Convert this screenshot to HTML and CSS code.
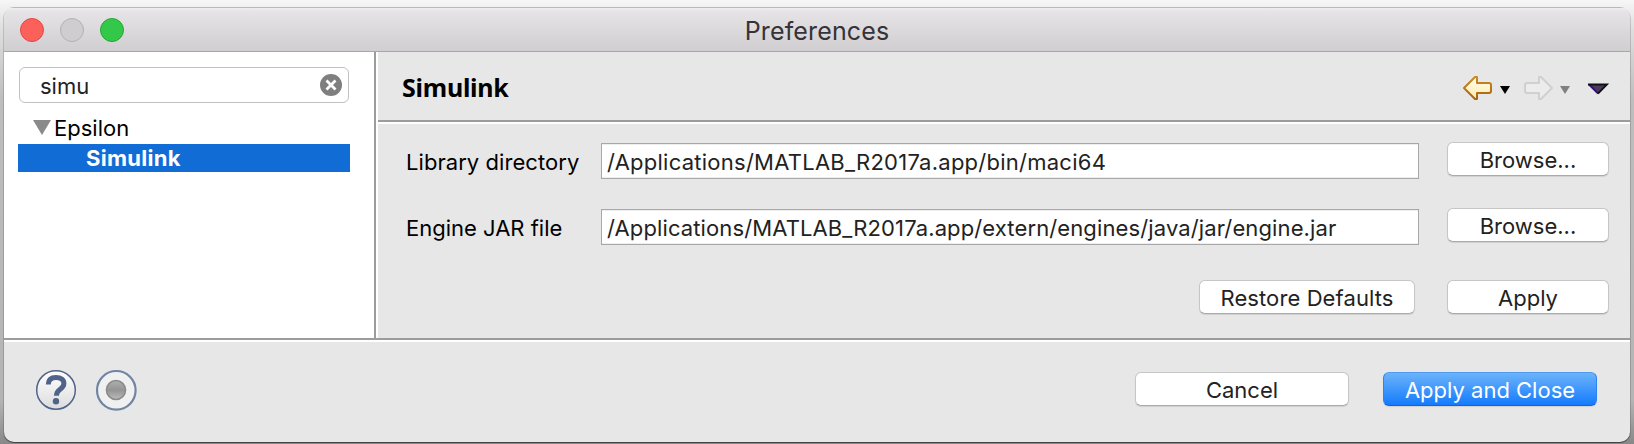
FILE: index.html
```html
<!DOCTYPE html>
<html lang="en">
<head>
<meta charset="utf-8">
<title>Preferences</title>
<link rel="stylesheet" href="styles.css">
</head>
<body>
<div class="window">
  <header class="titlebar">
    <div class="lights"><span class="light close"></span><span class="light min"></span><span class="light max"></span></div>
    <span class="title">Preferences</span>
  </header>
  <div class="main">
    <aside class="sidebar">
      <div class="search">
        <span class="query">simu</span>
        <svg width="22" height="22" viewBox="0 0 22 22"><circle cx="11" cy="11" r="11" fill="#7f7f7f"/><path d="M6.500 6.500l9 9M15.500 6.500l-9 9" stroke="#fff" stroke-width="2.800"/></svg>
      </div>
      <div class="tree-row">
        <svg width="18" height="15" viewBox="0 0 18 15"><path d="M0 0h18L9 15z" fill="#8a8a8a"/></svg>
        <span class="epsilon">Epsilon</span>
      </div>
      <div class="tree-row selected"><span class="node">Simulink</span></div>
    </aside>
    <section class="content">
      <div class="page-head">
        <h1 class="heading">Simulink</h1>
        <div class="nav">
          <svg width="150" height="30" viewBox="0 0 150 30">
            <defs>
              <linearGradient id="gold" x1="0" y1="0" x2="0" y2="1"><stop offset="0" stop-color="#fffdf0"/><stop offset="1" stop-color="#fdeaa8"/></linearGradient>
              <linearGradient id="edge" x1="0" y1="0" x2="0" y2="1"><stop offset="0" stop-color="#c98a24"/><stop offset="1" stop-color="#a8640f"/></linearGradient>
            </defs>
            <path d="M4 15L15 4H17V10H29Q31 10 31 12V18Q31 20 29 20H17V26H15Z" fill="url(#gold)" stroke="url(#edge)" stroke-width="2" stroke-linejoin="round"/>
            <path d="M40 13h10l-5 8z" fill="#000"/>
            <path d="M92 15L81 4H79V10H67Q65 10 65 12V18Q65 20 67 20H79V26H81Z" fill="#ececec" stroke="#d0d0d0" stroke-width="2" stroke-linejoin="round"/>
            <path d="M100 13h10l-5 8z" fill="#808080"/>
            <path d="M129 11.500h18l-9 9z" fill="#4b3a5c"/>
            <path d="M129 11.500l9 9" stroke="#32107c" stroke-width="1.800"/><path d="M128 11.500h19l-9 9" fill="none" stroke="#111" stroke-width="1.800"/>
          </svg>
        </div>
      </div>
      <div class="form">
        <div class="field"><span class="label library">Library directory</span><div class="input"><span class="path-one">/Applications/MATLAB_R2017a.app/bin/maci64</span></div><div class="button browse"><span>Browse...</span></div></div>
        <div class="field"><span class="label engine">Engine JAR file</span><div class="input"><span class="path-two">/Applications/MATLAB_R2017a.app/extern/engines/java/jar/engine.jar</span></div><div class="button browse"><span>Browse...</span></div></div>
        <div class="actions"><div class="button restore"><span>Restore Defaults</span></div><div class="button apply"><span>Apply</span></div></div>
      </div>
    </section>
  </div>
  <footer class="footer">
    <div class="tools">
      <svg width="42" height="42" viewBox="0 0 42 42"><defs><linearGradient id="disc" x1="0" y1="0" x2="0" y2="1"><stop offset="0" stop-color="#fff"/><stop offset="1" stop-color="#dcdcdc"/></linearGradient></defs><circle cx="21" cy="21" r="19.300" fill="url(#disc)" stroke="#50648a" stroke-width="1.500"/><path d="M13.300 15.500C13.300 10.500 16.500 8.500 21 8.500c4.800 0 7.900 2.200 7.900 6 0 3.200-2 4.500-4 6-2.300 1.700-3.500 2.800-3.500 6.300" fill="none" stroke="#50648a" stroke-width="5"/><circle cx="21" cy="32.200" r="3.200" fill="#50648a"/></svg>
      <svg width="42" height="42" viewBox="0 0 42 42"><defs><linearGradient id="knob" x1="0" y1="0" x2="0" y2="1"><stop offset="0" stop-color="#b0b0b0"/><stop offset=".5" stop-color="#949494"/><stop offset="1" stop-color="#bcbcbc"/></linearGradient></defs><circle cx="21.300" cy="21.300" r="19.300" fill="#f0f0f0" stroke="#7284a3" stroke-width="2.200"/><circle cx="21" cy="21" r="9.500" fill="url(#knob)" stroke="#8c8c8c" stroke-width="1.700"/></svg>
    </div>
    <div class="dialog-buttons"><div class="button cancel"><span>Cancel</span></div><div class="button primary"><span>Apply and Close</span></div></div>
  </footer>
</div>
</body>
</html>
```
FILE: styles.css
```css
* { box-sizing: border-box; }
body {
  margin: 0; width: 1634px; height: 444px; overflow: hidden;
  padding: 7px 4px 2px;
  background: linear-gradient(#f6f6f6 0, #dedede 30px, #bebebe 100px, #b4b4b4 400px, #888 444px);
  font: 22px/28px Inter, "Liberation Sans", sans-serif; color: #222;
  white-space: nowrap;
}
svg { display: block; flex: none; }
.window {
  width: 1626px; height: 435px; display: flex; flex-direction: column;
  background: #e7e7e7; border-radius: 10px; overflow: hidden;
  box-shadow: 0 1px 0 rgba(0,0,0,.3), -1px 1px 0 rgba(0,0,0,.15), 1px 1px 0 rgba(0,0,0,.15);
}
.titlebar {
  height: 45px; flex: none; display: grid; grid-template-columns: 1fr auto 1fr; align-items: center;
  padding: 1px 16px 0; border-top: 1px solid #b9b9b9; border-bottom: 1px solid #a9a6a9;
  background: linear-gradient(#eeecee, #e5e3e5 4px, #d0ced0);
}
.lights { display: flex; gap: 16px; }
.light { width: 24px; height: 24px; border-radius: 50%; border: 1px solid; }
.close { background: #fc605b; border-color: #e04a46; }
.min { background: #cfcdcf; border-color: #b3b1b3; }
.max { background: #34c84a; border-color: #24a835; }
.title { font-size: 25px; letter-spacing: .15px; color: #353336; padding-top: 1px; }
.main { height: 286px; flex: none; display: flex; }
.sidebar { width: 370px; flex: none; background: #fff; padding: 15px 20px 0 14px; }
.search {
  margin-left: 1px; width: 330px; height: 36px; border: 1px solid #c0c0c0; border-radius: 6px;
  display: flex; align-items: center; justify-content: space-between; padding: 0 6px 0 20px;
}
.query { padding-top: 2px; }
.tree-row { height: 28px; display: flex; align-items: center; color: #000; }
.search + .tree-row { margin: 10px 0 3px; padding-left: 15px; gap: 3px; }
.epsilon { padding-top: 1px; }
.tree-row.selected { width: 332px; background: #116cd6; color: #fff; font-weight: 700; letter-spacing: .3px; padding-left: 68px; }
.content { flex: 1; border-left: 2px solid #9c9c9c; box-shadow: inset 2px 0 #fff; }
.page-head {
  height: 72px; margin-left: 2px; padding: 0 18px 0 24px; display: flex; align-items: center; justify-content: space-between;
  border-bottom: 2px solid #fff; box-shadow: inset 0 -2px #9c9c9c;
}
.heading { margin: 0; font: bold 25px/30px "Noto Sans", "Open Sans", sans-serif; letter-spacing: -.25px; color: #000; }
.nav { margin: 2px 2px 0 0; }
.form { padding: 18px 21px 0 30px; }
.field { display: flex; align-items: flex-start; height: 66px; }
.label { width: 195px; padding-top: 6px; color: #000; }
.library { letter-spacing: .06px; }
.input { width: 818px; height: 36px; background: #fff; border: 1px solid #a8a8a8; box-shadow: inset 0 -1px #eee, inset 0 1px #eee; padding: 4px 0 0 5px; margin-top: 1px; }
.path-one { letter-spacing: .25px; }
.path-two { letter-spacing: .12px; }
.button {
  height: 34px; border-radius: 6px; background: #fff; border: 1px solid #c6c6c6; border-bottom-color: #aaa;
  box-shadow: 0 1px 1px rgba(0,0,0,.1); display: flex; align-items: center; justify-content: center;
  padding-top: 2px;
}
.browse { width: 162px; margin-left: auto; }
.actions { display: flex; justify-content: flex-end; gap: 32px; padding-top: 6px; }
.restore { width: 216px; letter-spacing: .1px; }
.apply { width: 162px; }
.footer {
  flex: 1; border-top: 2px solid #9c9c9c; box-shadow: inset 0 2px #fff;
  display: flex; justify-content: space-between; padding: 29px 33px 0 31px;
}
.tools { display: flex; gap: 18px; }
.dialog-buttons { display: flex; gap: 34px; padding-top: 3px; }
.cancel, .primary { width: 214px; }
.primary { background: linear-gradient(#6cb3fa, #147bfd); border-color: #4f9bf2 #2d82f5 #0d62e8; color: #fff; }
```
